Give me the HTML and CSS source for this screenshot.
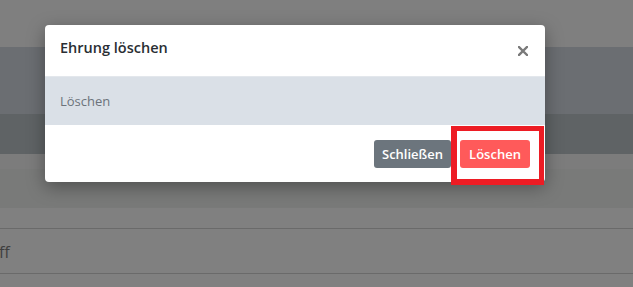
FILE: index.html
```html
<!DOCTYPE html>
<html lang="de">
<head>
<meta charset="utf-8">
<title>Ehrung löschen</title>
<link rel="stylesheet" href="styles.css">
</head>
<body>
<div class="page">
  <div class="band band-top"></div>
  <div class="band band-head"></div>
  <div class="band band-sub"></div>
  <div class="band band-gap"></div>
  <div class="band band-filter"></div>
  <div class="band band-space"></div>
  <div class="row"><span class="cell">ff</span></div>
  <div class="row row-last"></div>
</div>

<div class="modal">
  <div class="modal-header">
    <h5 class="modal-title">Ehrung löschen</h5>
    <button class="close" type="button" aria-label="Close">
      <svg width="10" height="10" viewBox="0 0 10 10"><path d="M1 1 L9 9 M9 1 L1 9" stroke="#7a7a7a" stroke-width="2.4" stroke-linecap="square"/></svg>
    </button>
  </div>
  <div class="modal-body">Löschen</div>
  <div class="modal-footer">
    <button class="btn btn-secondary" type="button">Schließen</button>
    <button class="btn btn-danger" type="button">Löschen</button>
  </div>
</div>

<div class="highlight"></div>
</body>
</html>
```

FILE: styles.css
```css
html, body {
  margin: 0;
  padding: 0;
}
body {
  width: 633px;
  height: 287px;
  overflow: hidden;
  background: #808080;
  font-family: "Open Sans", "Liberation Sans", sans-serif;
  position: relative;
}
.page {
  display: flex;
  flex-direction: column;
}
.band-top { height: 47px; background: #7f7f7f; }
.band-head { height: 67px; background: #6b6e72; }
.band-sub { height: 40px; background: #5f6365; }
.band-gap { height: 15px; background: #7c7c7c; }
.band-filter { height: 39px; background: #797a79; }
.band-space { height: 20px; background: #808080; }
.row {
  height: 44px;
  border-top: 1px solid #6a6a6a;
  background: #808080;
  display: flex;
  align-items: center;
}
.row-last { height: 20px; }
.cell {
  margin-left: -1px;
  color: #3f3f3f;
  font-size: 16px;
  padding-top: 2px;
}

.modal {
  position: absolute;
  left: 45px;
  top: 25px;
  width: 500px;
  background: #fff;
  border-radius: 4px;
  box-shadow: 0 5px 18px rgba(0, 0, 0, 0.35);
  overflow: hidden;
}
.modal-header {
  height: 51px;
  box-sizing: border-box;
  padding: 0 17px 0 15px;
  display: flex;
  align-items: center;
  justify-content: space-between;
}
.modal-title {
  margin: 0 0 6px 0;
  font-size: 14.5px;
  font-weight: 600;
  line-height: 23px;
  color: #2a2e33;
}
.close {
  border: 0;
  background: none;
  padding: 0;
  width: 10px;
  height: 10px;
  display: flex;
  margin-top: 1px;
}
.modal-body {
  height: 49px;
  box-sizing: border-box;
  background: #dae0e7;
  border-top: 1px solid #e3e7ec;
  padding: 0 15px;
  display: flex;
  align-items: center;
  font-size: 13px;
  font-weight: 400;
  color: #6c737b;
}
.modal-footer {
  height: 57px;
  box-sizing: border-box;
  padding: 0 15px;
  display: flex;
  align-items: center;
  justify-content: flex-end;
  gap: 9px;
}
.btn {
  height: 28px;
  border: 0;
  border-radius: 3px;
  font-family: "Open Sans", "Liberation Sans", sans-serif;
  font-size: 13px;
  font-weight: 600;
  color: #fff;
  padding: 0;
  display: flex;
  align-items: center;
  justify-content: center;
}
.btn-secondary {
  width: 77px;
  background: #6c757d;
}
.btn-danger {
  width: 70px;
  background: #ff5a5a;
}

.highlight {
  position: absolute;
  left: 451px;
  top: 126px;
  width: 93px;
  height: 59px;
  box-sizing: border-box;
  border-style: solid;
  border-color: #ed1c24;
  border-width: 5px 5px 6px 6px;
}
```
